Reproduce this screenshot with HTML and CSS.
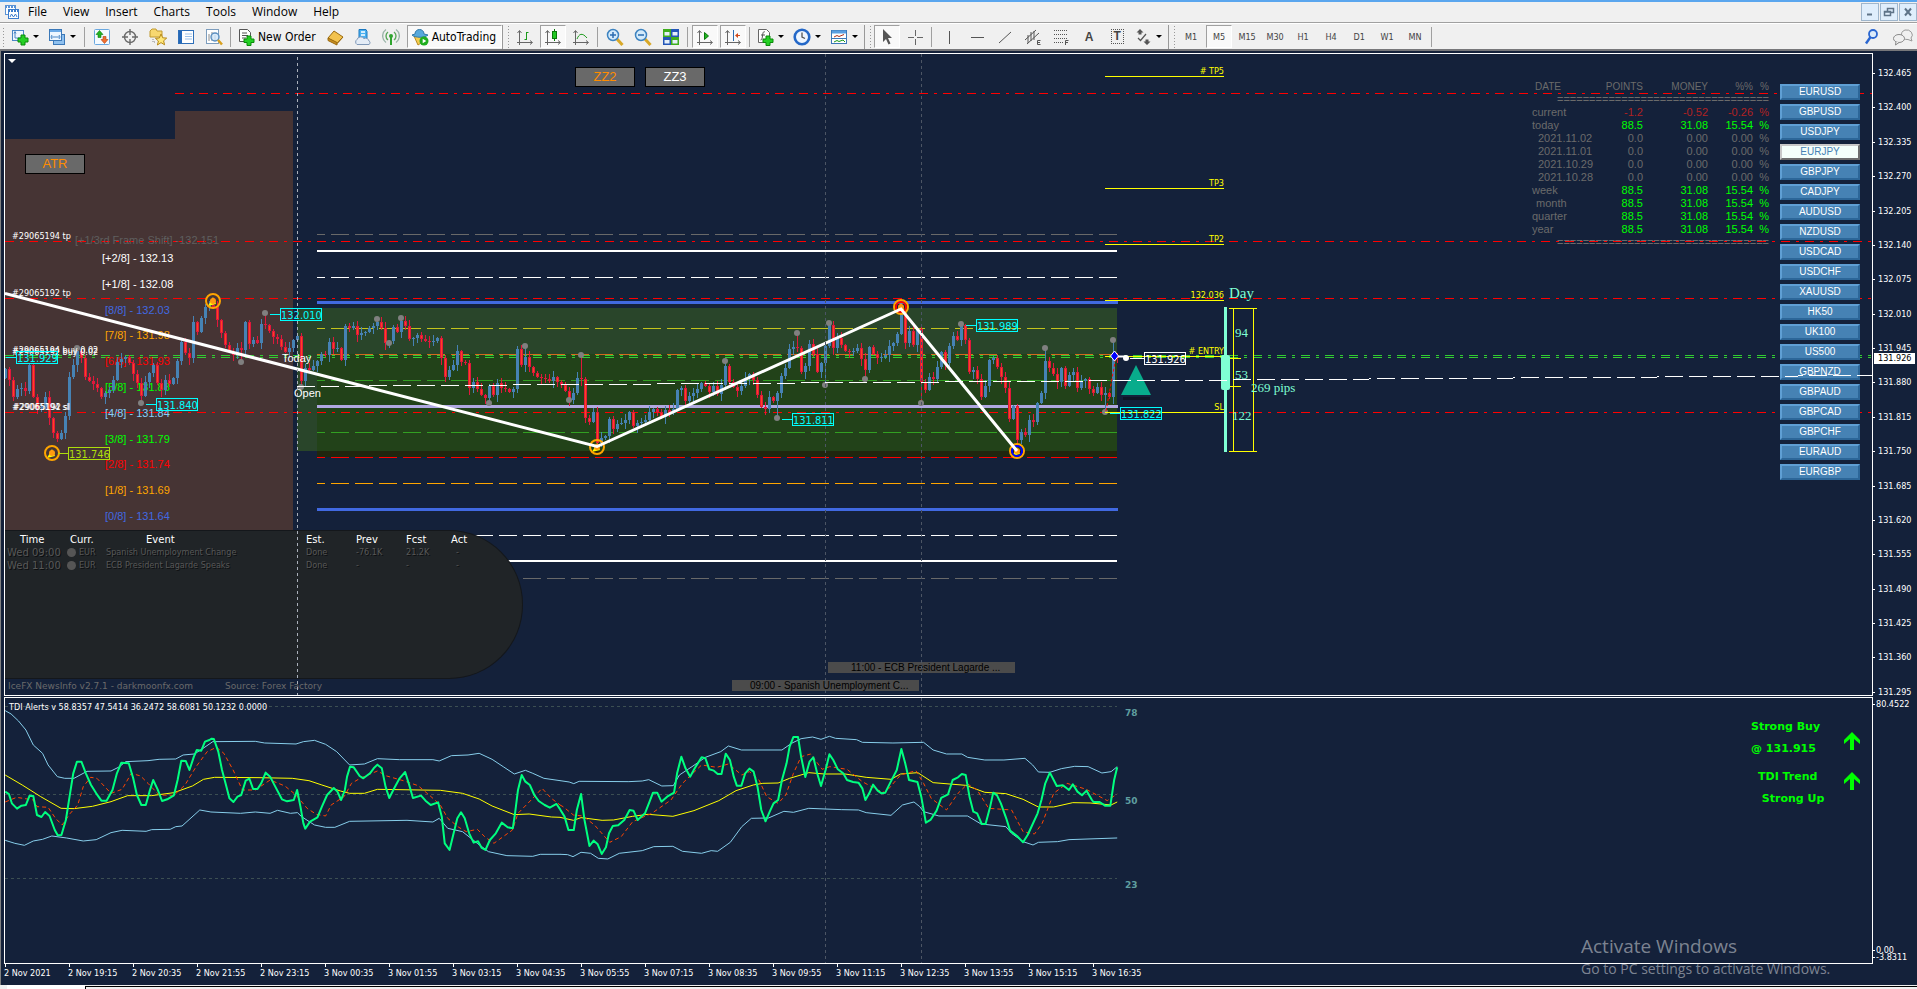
FILE: index.html
```html
<!DOCTYPE html>
<html lang="en">
<head>
  <meta charset="UTF-8" />
  <meta name="viewport" content="width=device-width, initial-scale=1.0"/>
  <title>EURJPY,M5</title>
  <link rel="stylesheet" href="styles.css">
</head>
<body>
  <div class="terminal">
    <header class="menubar">
      <svg class="app-icon" width="16" height="16" viewBox="0 0 16 16"><rect x="1.500" y="1.500" width="10" height="9" fill="#fff" stroke="#5b93d6"/><path d="M1 3h11" stroke="#5b93d6" stroke-width="2" stroke-dasharray="2 1"/><rect x="4.500" y="5.500" width="10" height="9" fill="#fff" stroke="#3c7ccc"/><path d="M4 7h11" stroke="#3c7ccc" stroke-width="2" stroke-dasharray="2 1"/><path d="M6 13l1.500-3 2 3 2-3 1.500 3" fill="none" stroke="#3c7ccc"/></svg>
      <nav class="menu">
        <a href="#">File</a>
        <a href="#">View</a>
        <a href="#">Insert</a>
        <a href="#">Charts</a>
        <a href="#">Tools</a>
        <a href="#">Window</a>
        <a href="#">Help</a>
      </nav>
      <div class="window-buttons">
        <button aria-label="Minimize"><svg width="12" height="12" viewBox="0 0 12 12"><path d="M3 8.500h5" stroke="#5f7488" stroke-width="2"/></svg></button>
        <button aria-label="Restore"><svg width="12" height="12" viewBox="0 0 12 12"><path d="M4.500 5V2.500h6v4H8M4.500 2.500h6M1.500 5.500h6v4h-6zM1.500 6h6" fill="none" stroke="#5f7488" stroke-width="1.500"/></svg></button>
        <button aria-label="Close"><svg width="12" height="12" viewBox="0 0 12 12"><path d="M3 2.500l6 7M9 2.500l-6 7" stroke="#5f7488" stroke-width="2"/></svg></button>
      </div>
    </header>

    <div class="toolbar">
      <span class="grip"></span>
      <button class="tool drop" aria-label="New chart"><svg width="18" height="18" viewBox="0 0 18 18"><rect x="1.500" y="2.500" width="11" height="10" fill="#eef6ff" stroke="#4a86c5"/><path d="M4 4v6h7M3 5.500l1-2 1 2" fill="none" stroke="#4a86c5"/><path d="M10 7h4v3h3v4h-3v3h-4v-3H7v-4h3z" fill="#25d025" stroke="#0a8a0a"/></svg></button>
      <button class="tool drop" aria-label="Profiles"><svg width="18" height="18" viewBox="0 0 18 18"><rect x="5.500" y="6.500" width="11" height="10" fill="#8fc0ee" stroke="#3b78b8"/><rect x="1.500" y="1.500" width="12" height="11" fill="#eef6ff" stroke="#3b78b8"/><path d="M2 3h11" stroke="#6aa8e6" stroke-width="2"/><path d="M4 9h7M4 7l-1 2 1 2M11 7l1 2-1 2" fill="none" stroke="#4a86c5"/></svg></button>
      <span class="sep"></span>
      <button class="tool" aria-label="Market Watch"><svg width="18" height="18" viewBox="0 0 18 18"><rect x="1.500" y="1.500" width="15" height="15" rx="1" fill="#f4faff" stroke="#6aa8e0"/><path d="M6.500 2.500L10 6.500H8v3H5v-3H3z" fill="#22b422" stroke="#0d7a0d" stroke-width=".6"/><path d="M11.500 15.500L8 11.500h2v-3h3v3h2z" fill="#f07030" stroke="#b04010" stroke-width=".6"/></svg></button>
      <button class="tool" aria-label="Data Window"><svg width="18" height="18" viewBox="0 0 18 18"><circle cx="9" cy="9" r="5.500" fill="none" stroke="#6a6a6a" stroke-width="1.400"/><path d="M9 1v6M9 11v6M1 9h6M11 9h6" stroke="#6a6a6a" stroke-width="1.400"/></svg></button>
      <button class="tool" aria-label="Navigator"><svg width="18" height="18" viewBox="0 0 18 18"><path d="M1 3l2-2h4l1 2h5v6H1z" fill="#f8d870" stroke="#c09a30"/><path d="M4 11v3h3" fill="none" stroke="#888" stroke-dasharray="1 1"/><path d="M12 6l1.700 3.800 4 .3-3.100 2.700 1 4-3.600-2.200L8.400 17l1-4-3-2.700 4-.3z" fill="#ffe87a" stroke="#b88a18"/></svg></button>
      <button class="tool" aria-label="Terminal"><svg width="18" height="18" viewBox="0 0 18 18"><rect x="1.500" y="2.500" width="15" height="13" fill="#fff" stroke="#2f6fb8"/><rect x="2" y="3" width="3" height="12" fill="#2468b8"/><path d="M8 6h7M8 8.500h7M8 11h7" stroke="#9fc3ea"/></svg></button>
      <button class="tool" aria-label="Strategy Tester"><svg width="18" height="18" viewBox="0 0 18 18"><rect x="1.500" y="1.500" width="12" height="14" fill="#fff" stroke="#7d9dbd"/><path d="M4 13V6M7 13V4M10 13V7" stroke="#8a8a8a"/><circle cx="10" cy="9" r="4" fill="#cfe6fa" fill-opacity=".8" stroke="#5b8fc0" stroke-width="1.400"/><path d="M13 12l4 4.500" stroke="#d8a020" stroke-width="2.500"/></svg></button>
      <span class="sep"></span>
      <button class="tool text new-order"><svg width="18" height="18" viewBox="0 0 18 18"><path d="M2.500 1.500h8l3 3v9h-11z" fill="#fff" stroke="#555"/><path d="M5 5h5M5 7.500h6M5 10h4" stroke="#555"/><path d="M10 8h4v3h3v3.500h-3v3h-4v-3H7V11h3z" fill="#25d025" stroke="#0a8a0a"/></svg>New Order</button>
      <button class="tool" aria-label="MetaEditor"><svg width="18" height="18" viewBox="0 0 18 18"><path d="M2 10L8 3l9 6-6 6.500z" fill="#f2c24e" stroke="#9a6a10"/><path d="M2 10v2.500l9 4.500v-2.500zM11 15.500l6-6.500" fill="#c98f20" stroke="#9a6a10"/></svg></button>
      <button class="tool" aria-label="Virtual hosting"><svg width="18" height="18" viewBox="0 0 18 18"><path d="M5 1.500h7l1 2v7H5z" fill="#49b0f0" stroke="#1b78c0"/><path d="M7 4h4M7 7h4" stroke="#fff" stroke-width="1.500"/><path d="M3 16.500a3 3 0 010-5 4 4 0 017-1 3.500 3.500 0 015 2.500 2 2 0 010 3.500z" fill="#e4ecf6" stroke="#7f98b8"/></svg></button>
      <button class="tool" aria-label="Signals"><svg width="18" height="18" viewBox="0 0 18 18"><path d="M9 9v8" stroke="#2fa52f" stroke-width="2"/><circle cx="9" cy="8" r="2" fill="#2fa52f"/><path d="M6 12a5 5 0 010-8M12 4a5 5 0 010 8" fill="none" stroke="#5aa85a" stroke-width="1.400"/><path d="M4 14.500a8 8 0 010-13M14 1.500a8 8 0 010 13" fill="none" stroke="#9ab4a8" stroke-width="1.400"/></svg></button>
      <button class="tool text auto pressed"><svg width="18" height="18" viewBox="0 0 18 18"><path d="M3 8h11l-4 7-3 2z" fill="#f6cc50" stroke="#b88a20"/><path d="M4 6c0-6 9-6 9 0l4 1c-3 3-13 3-16 0z" fill="#57a9dc" stroke="#2f78a8"/><circle cx="13" cy="13" r="4.500" fill="#1fae1f"/><path d="M11.700 10.700v4.600l3.600-2.300z" fill="#fff"/></svg>AutoTrading</button>
      <span class="grip edge"></span>
      <button class="tool" aria-label="Bar chart"><svg width="18" height="18" viewBox="0 0 18 18"><path d="M3.500 17V3M1.500 5l2-2.500 2 2.500M1 14.500h15M14 12.500l2.500 2-2.500 2" fill="none" stroke="#666"/><path d="M8.500 11.500h2V4.500h2M10.500 4v8" fill="none" stroke="#1a9a1a"/></svg></button>
      <button class="tool pressed" aria-label="Candlesticks"><svg width="18" height="18" viewBox="0 0 18 18"><path d="M3.500 17V3M1.500 5l2-2.500 2 2.500M1 14.500h15M14 12.500l2.500 2-2.500 2" fill="none" stroke="#666"/><path d="M10.500 1v12" stroke="#0a7a0a"/><rect x="8.500" y="3.500" width="4" height="7" fill="#22c822" stroke="#0a7a0a"/></svg></button>
      <button class="tool" aria-label="Line chart"><svg width="18" height="18" viewBox="0 0 18 18"><path d="M3.500 17V3M1.500 5l2-2.500 2 2.500M1 14.500h15M14 12.500l2.500 2-2.500 2" fill="none" stroke="#666"/><path d="M5 11c2-5 5-7 10-1" fill="none" stroke="#1a9a1a"/></svg></button>
      <span class="sep"></span>
      <button class="tool" aria-label="Zoom in"><svg width="18" height="18" viewBox="0 0 18 18"><path d="M11 11l5.500 6" stroke="#d8a828" stroke-width="3"/><circle cx="7" cy="7" r="5.500" fill="#d4ebfb" stroke="#3d83c0" stroke-width="1.500"/><path d="M7 4v6M4 7h6" stroke="#2a6cb0" stroke-width="1.500"/></svg></button>
      <button class="tool" aria-label="Zoom out"><svg width="18" height="18" viewBox="0 0 18 18"><path d="M11 11l5.500 6" stroke="#d8a828" stroke-width="3"/><circle cx="7" cy="7" r="5.500" fill="#d4ebfb" stroke="#3d83c0" stroke-width="1.500"/><path d="M4 7h6" stroke="#2a6cb0" stroke-width="1.500"/></svg></button>
      <button class="tool" aria-label="Tile windows"><svg width="18" height="18" viewBox="0 0 18 18"><path d="M1 1h8v8H1zM9 9h8v8H9z" fill="#3fae1e"/><path d="M9 1h8v8H9zM1 9h8v8H1z" fill="#2456b8"/><path d="M2.500 4h5v3.500h-5zM10.500 4h5v3.500h-5zM2.500 12h5v3.500h-5zM10.500 12h5v3.500h-5z" fill="#e6f0fa"/></svg></button>
      <span class="sep"></span>
      <button class="tool pressed" aria-label="Auto scroll"><svg width="18" height="18" viewBox="0 0 18 18"><path d="M3.500 17V3M1.500 5l2-2.500 2 2.500M1 14.500h15M14 12.500l2.500 2-2.500 2" fill="none" stroke="#666"/><path d="M8.500 4.500v7l4-3.500z" fill="#22b422" stroke="#0a7a0a"/></svg></button>
      <button class="tool pressed" aria-label="Chart shift"><svg width="18" height="18" viewBox="0 0 18 18"><path d="M3.500 17V3M1.500 5l2-2.500 2 2.500M1 14.500h15M14 12.500l2.500 2-2.500 2" fill="none" stroke="#666"/><path d="M9.500 2v11" stroke="#2a6cb0"/><path d="M16 7.500h-4" stroke="#d04818"/><path d="M14 5l-3 2.500 3 2.500z" fill="#d04818"/></svg></button>
      <span class="sep"></span>
      <button class="tool drop" aria-label="Indicators"><svg width="18" height="18" viewBox="0 0 18 18"><path d="M2.500 1.500h8l3 3v10h-11z" fill="#fff" stroke="#666"/><path d="M9 4c-2-1-2 1-2.500 4S6 12 4.500 12M5 7h4" fill="none" stroke="#555"/><path d="M10 8h4v3h3v3.500h-3v3h-4v-3H7V11h3z" fill="#25d025" stroke="#0a8a0a"/></svg></button>
      <button class="tool drop" aria-label="Periods"><svg width="18" height="18" viewBox="0 0 18 18"><circle cx="9" cy="9" r="7.300" fill="#eef6ff" stroke="#2468c8" stroke-width="2.600"/><path d="M9 4.500V9l3 1.500" fill="none" stroke="#555" stroke-width="1.300"/></svg></button>
      <button class="tool drop" aria-label="Templates"><svg width="18" height="18" viewBox="0 0 18 18"><rect x="1.500" y="2.500" width="15" height="13" fill="#fff" stroke="#3b78b8"/><path d="M2 4h14" stroke="#5a9fe0" stroke-width="3"/><path d="M4 9l3-1.500 2 1 5-2" fill="none" stroke="#b03018"/><path d="M2 10.500h14" stroke="#3b78b8"/><path d="M4 14l3-1.500 2 1 4-1.500 2 2" fill="none" stroke="#1a9a1a"/></svg></button>
      <span class="grip edge"></span>
      <button class="tool pressed" aria-label="Cursor"><svg width="18" height="18" viewBox="0 0 18 18"><path d="M5 1v13l3-3 2.500 5.500 2-1L10 10h4z" fill="#555"/></svg></button>
      <button class="tool" aria-label="Crosshair"><svg width="18" height="18" viewBox="0 0 18 18"><path d="M9.500 2v6M9.500 11v6M2 9.500h6M11 9.500h6" stroke="#666"/></svg></button>
      <span class="sep"></span>
      <button class="tool" aria-label="Vertical line"><svg width="18" height="18" viewBox="0 0 18 18"><path d="M9.500 3v13" stroke="#555"/></svg></button>
      <button class="tool" aria-label="Horizontal line"><svg width="18" height="18" viewBox="0 0 18 18"><path d="M3 9.500h13" stroke="#555"/></svg></button>
      <button class="tool" aria-label="Trendline"><svg width="18" height="18" viewBox="0 0 18 18"><path d="M3 15L15 4" stroke="#555"/></svg></button>
      <button class="tool" aria-label="Equidistant channel"><svg width="18" height="18" viewBox="0 0 18 18"><path d="M1 12L12 2M3 16L15 5M4 7v8M7 4v9M10 3v9" stroke="#555"/><path d="M16.500 12.500h-3v4h3M13.500 14.500h2.500" fill="none" stroke="#555"/></svg></button>
      <button class="tool" aria-label="Fibonacci retracement"><svg width="18" height="18" viewBox="0 0 18 18"><path d="M2 2.500h14M2 6.500h14M2 10.500h14M2 14.500h10" stroke="#555" stroke-dasharray="1 1"/><path d="M13.500 17v-4.500h3M13.500 14.500h2.500" fill="none" stroke="#555"/></svg></button>
      <button class="tool letter">A</button>
      <button class="tool letter boxed" aria-label="Text label"><span>T</span></button>
      <button class="tool drop" aria-label="Arrows"><svg width="18" height="18" viewBox="0 0 18 18"><path d="M6 1l3.500 3.500H7.500v2h-3v-2h-2zM13 17l-3.500-3.500h2v-2h3v2h2z" fill="#555"/><path d="M4 10l2.500 2.500L12 6" fill="none" stroke="#555" stroke-width="1.200"/></svg></button>
      <span class="grip edge"></span>
      <button class="tool tf">M1</button>
      <button class="tool tf pressed">M5</button>
      <button class="tool tf">M15</button>
      <button class="tool tf">M30</button>
      <button class="tool tf">H1</button>
      <button class="tool tf">H4</button>
      <button class="tool tf">D1</button>
      <button class="tool tf">W1</button>
      <button class="tool tf">MN</button>
      <span class="sep"></span>
      <div class="toolbar-right">
        <button class="tool" aria-label="Search"><svg width="18" height="18" viewBox="0 0 18 18"><circle cx="11" cy="6" r="4" fill="#dcebfa" stroke="#2a66d0" stroke-width="1.800"/><path d="M8.500 9L4 15.500" stroke="#2a66d0" stroke-width="2.400"/></svg></button>
        <button class="tool" aria-label="Messages"><svg width="22" height="18" viewBox="0 0 22 18"><path d="M13 2a6 5 0 016 8l1 3-4-1.500A6 5 0 0113 2z" fill="#f0f0f0" stroke="#999"/><ellipse cx="7" cy="10.500" rx="5.500" ry="4" fill="#f0f0f0" stroke="#8a8a8a"/><path d="M4 13.500l-.5 3.500 3.500-2.500" fill="#f0f0f0" stroke="#8a8a8a"/></svg></button>
      </div>
    </div>

    <main class="chart">
      <section class="pane price-pane">
        <svg class="canvas">
          <g transform="translate(-5 -54)">
            <!-- session boxes -->
            <path class="asia" d="M5 139h170V111h118v420H5z"/>
            <path d="M297 308h820v143H297z" fill="#29452a"/>
            <path d="M317 354h800v97H317z" fill="#224219"/>
            <path d="M317 451h800v6H317z" fill="#20260f"/>

            <!-- order lines -->
            <g class="order red">
              <path d="M175 93.500H4000"/>
              <path d="M5 241.500H4000"/>
              <path d="M5 298.500H4000"/>
              <path d="M5 412.500H4000"/>
            </g>
            <g class="order green">
              <path d="M5 355.500H4000"/>
              <path d="M5 357.500H4000"/>
            </g>

            <!-- murrey levels -->
            <g class="level">
              <path d="M317 234.500h800" stroke="#696969"/>
              <path d="M317 277.500h800" stroke="#fff"/>
              <path d="M317 328.500h800" stroke="#c4c41c"/>
              <path d="M317 354.500h800" stroke="#d2691e"/>
              <path d="M317 380.500h800" stroke="#32a022"/>
              <path d="M317 432.500h800" stroke="#32a022"/>
              <path d="M317 457.500h800" stroke="#f00"/>
              <path d="M317 483.500h800" stroke="#ffa500"/>
              <path d="M317 535.500h800" stroke="#fff"/>
              <path d="M317 578.500h800" stroke="#696969"/>
            </g>
            <g fill="none">
              <path d="M317 251h800M317 561h800" stroke="#fff" stroke-width="2"/>
              <path d="M317 302.500h801M317 509.500h801" stroke="#4169e1" stroke-width="3"/>
              <path d="M317 406.500h801" stroke="#b0a8e0" stroke-width="3"/>
            </g>

            <g id="levels" class="arial"></g>
            <text class="arial" x="75" y="244" fill="#5f5f5f">[+1/3rd Frame Shift] -132.151</text>

            <g id="candles" shape-rendering="crispEdges"></g>
            <g id="fractals" fill="#808080"></g>

            <g class="small" fill="#fff">
              <text x="12" y="239">#29065194 tp</text>
              <text x="12" y="296">#29065192 tp</text>
              <text x="12" y="353">#29065194 buy 0.02</text>
              <text x="12" y="355">#29065192 buy 0.02</text>
              <text x="12" y="410">#29065194 sl</text>
              <text x="13" y="410">#29065192 sl</text>
            </g>
            <g class="arial" fill="#fff">
              <text x="282" y="362">Today</text>
              <text x="294" y="397">Open</text>
            </g>

            <!-- zigzag -->
            <g id="swings"></g>
            <path d="M5 293.500L597 446.500 901 309 1017 451" fill="none" stroke="#fff" stroke-width="3"/>

            <!-- targets -->
            <path d="M1105 76.500h119M1105 188.500h119M1105 244.500h119M1105 300.500h119M1105 356.500h119M1105 412.500h119" stroke="#ff0"/>
            <g class="small" fill="#ff0" text-anchor="end">
              <text x="1224" y="74"># TP5</text>
              <text x="1224" y="186">TP3</text>
              <text x="1224" y="242">TP2</text>
              <text x="1224" y="298">132.036</text>
              <text x="1224" y="354"># ENTRY</text>
              <text x="1224" y="410">SL</text>
            </g>
            <path d="M1106 411l10-54" stroke="#f00" stroke-dasharray="3 2"/>
            <path d="M1130 358.500h14" stroke="#fff"/>
            <path d="M1118 356.500h8" stroke="#fff" stroke-width="2"/>
            <circle cx="1126" cy="358" r="3" fill="#fff"/>
            <path d="M1114.500 351l4 5-4 5-4-5z" fill="#00f" stroke="#fff"/>
            <g id="tags"></g>
            <path d="M1123 397h27v3h-27z" fill="#0e1626"/>
            <path d="M1136 365l15 30h-30z" fill="#08ac8c"/>

            <!-- daily range -->
            <path d="M1225.500 307v145" stroke="#7fffd4" stroke-width="3"/>
            <rect x="1221" y="355" width="9" height="35" rx="2" fill="#7fffd4"/>
            <path d="M1229 308.500h28M1229 451.500h28M1233.500 308v143M1253.500 308v143M1230 358.500h11M1230 386.500h11" stroke="#ff0" fill="none"/>
            <g class="range" fill="#7fffd4">
              <text class="day" x="1229" y="298">Day</text>
              <text x="1235" y="337">94</text>
              <text x="1235" y="379">53</text>
              <text x="1232" y="420">122</text>
              <text x="1251" y="392">269 pips</text>
            </g>
            <path d="M8 59h8l-4 4z" fill="#fff"/>

            <!-- news footer and bars -->
            <g class="footer-text">
              <text x="8" y="689">IceFX NewsInfo v2.7.1 - darkmoonfx.com</text>
              <text x="225" y="689">Source: Forex Factory</text>
            </g>
            <path d="M828 662h187v11H828zM732 680h187v11H732z" fill="#4b4b4b"/>
            <g class="bar-label">
              <text x="851" y="671">11:00 - ECB President Lagarde ...</text>
              <text x="750" y="689">09:00 - Spanish Unemployment C...</text>
            </g>
          </g>
        </svg>

        <button class="flat atr">ATR</button>
        <div class="zz">
          <button class="flat">ZZ2</button>
          <button class="flat off">ZZ3</button>
        </div>

        <div class="news">
          <table>
            <colgroup><col class="c-time"><col class="c-curr"><col class="c-event"><col class="c-est"><col class="c-prev"><col class="c-fcst"><col></colgroup>
            <thead>
              <tr><th class="h-time">Time</th><th class="h-curr">Curr.</th><th class="h-event">Event</th><th>Est.</th><th>Prev</th><th>Fcst</th><th>Act</th></tr>
            </thead>
            <tbody>
              <tr><td class="time">Wed 09:00</td><td><i class="impact"></i>EUR</td><td>Spanish Unemployment Change</td><td>Done</td><td>-76.1K</td><td>21.2K</td><td class="act">-</td></tr>
              <tr><td class="time">Wed 11:00</td><td><i class="impact"></i>EUR</td><td>ECB President Lagarde Speaks</td><td>Done</td><td>-</td><td>-</td><td class="act">-</td></tr>
            </tbody>
          </table>
        </div>

        <table class="profit">
          <colgroup><col class="p-date"><col class="p-points"><col class="p-money"><col class="p-pct"><col class="p-sign"></colgroup>
          <thead>
            <tr><th>DATE</th><th>POINTS</th><th>MONEY</th><th>%%</th><th>%</th></tr>
            <tr><td class="rule" colspan="5">=================================</td></tr>
          </thead>
          <tbody>
            <tr class="loss"><th>current</th><td>-1.2</td><td>-0.52</td><td>-0.26</td><td>%</td></tr>
            <tr class="gain"><th>today</th><td>88.5</td><td>31.08</td><td>15.54</td><td>%</td></tr>
            <tr><th class="past">2021.11.02</th><td>0.0</td><td>0.00</td><td>0.00</td><td>%</td></tr>
            <tr><th class="past">2021.11.01</th><td>0.0</td><td>0.00</td><td>0.00</td><td>%</td></tr>
            <tr><th class="past">2021.10.29</th><td>0.0</td><td>0.00</td><td>0.00</td><td>%</td></tr>
            <tr><th class="past">2021.10.28</th><td>0.0</td><td>0.00</td><td>0.00</td><td>%</td></tr>
            <tr class="gain"><th>week</th><td>88.5</td><td>31.08</td><td>15.54</td><td>%</td></tr>
            <tr class="gain"><th class="month">month</th><td>88.5</td><td>31.08</td><td>15.54</td><td>%</td></tr>
            <tr class="gain"><th>quarter</th><td>88.5</td><td>31.08</td><td>15.54</td><td>%</td></tr>
            <tr class="gain"><th>year</th><td>88.5</td><td>31.08</td><td>15.54</td><td>%</td></tr>
            <tr><td class="rule" colspan="5">=================================</td></tr>
          </tbody>
        </table>

        <div class="symbols">
          <button>EURUSD</button>
          <button>GBPUSD</button>
          <button>USDJPY</button>
          <button class="active">EURJPY</button>
          <button>GBPJPY</button>
          <button>CADJPY</button>
          <button>AUDUSD</button>
          <button>NZDUSD</button>
          <button>USDCAD</button>
          <button>USDCHF</button>
          <button>XAUUSD</button>
          <button>HK50</button>
          <button>UK100</button>
          <button>US500</button>
          <button>GBPNZD</button>
          <button>GBPAUD</button>
          <button>GBPCAD</button>
          <button>GBPCHF</button>
          <button>EURAUD</button>
          <button>EURGBP</button>
        </div>

        <svg class="canvas overlay">
          <g transform="translate(-5 -54)" fill="none" shape-rendering="crispEdges">
            <path d="M297.500 57v2000" stroke="#aab0ba" stroke-dasharray="3 3"/>
            <path d="M825.500 54v2000M921.500 54v2000" stroke="#4c5564" stroke-dasharray="3 3"/>
            <path d="M297 386.500L1872 375.500" stroke="#fff" stroke-dasharray="18 6"/>
          </g>
        </svg>
      </section>

      <div class="axis price-axis">
        <span>132.465</span><span>132.400</span><span>132.335</span><span>132.270</span><span>132.205</span><span>132.140</span><span>132.075</span><span>132.010</span><span>131.945</span><span>131.880</span><span>131.815</span><span>131.750</span><span>131.685</span><span>131.620</span><span>131.555</span><span>131.490</span><span>131.425</span><span>131.360</span><span>131.295</span>
        <b class="bid">131.926</b>
      </div>

      <section class="pane tdi-pane">
        <svg class="canvas">
          <g transform="translate(-5 -698)">
            <path d="M5 706.500h1112M5 794.500h1112M5 878.500h1112" stroke="#3c4f52" stroke-dasharray="3 3"/>
            <path d="M825.500 698v1000M921.500 698v1000" stroke="#4c5564" stroke-dasharray="3 3"/>
            <!-- first half of the session -->
            <g class="tdi" transform="translate(0 690) scale(.37 .3333)">
              <polyline class="band" points="14,62 30,72 50,93 70,120 90,165 115,190 130,225 155,260 175,265 200,265 235,244 300,243 320,232 340,215 400,212 430,208 475,207 495,195 525,192 545,178 575,155 690,154 715,159 800,162 820,155 850,151 880,163 910,185 945,225 985,222 1020,206 1080,209 1170,209 1187,213 1220,197 1265,195 1295,190 1330,208 1360,230 1390,252 1420,241 1440,250 1470,265 1514,272"/>
              <polyline class="band" points="14,451 40,460 66,466 90,453 115,448 140,438 180,444 225,453 260,449 300,428 330,421 395,424 410,419 460,418 475,410 492,408 540,360 570,366 650,370 690,366 730,370 750,361 785,370 804,368 815,380 850,405 880,412 905,412 945,394 1100,391 1170,396 1187,385 1210,415 1250,425 1290,460 1320,485 1370,497 1440,499 1460,493 1514,493"/>
              <polyline class="base" points="14,255 60,285 110,320 165,355 200,356 250,349 300,335 345,317 410,317 470,308 520,288 550,268 580,262 700,263 790,265 835,272 870,285 920,303 945,310 985,310 1020,298 1190,301 1250,310 1295,327 1330,348 1390,374 1430,372 1490,381 1514,382"/>
              <polyline class="signal" points="14,336 45,322 90,330 100,350 130,352 150,385 168,405 190,370 210,345 225,290 245,262 262,265 300,310 330,298 355,250 380,258 400,280 430,315 470,316 500,285 530,230 560,185 585,172 605,190 630,240 655,300 690,300 730,270 770,288 800,315 830,355 855,373 880,378 895,345 930,320 950,280 975,264 1020,243 1045,258 1090,272 1130,287 1160,315 1190,345 1210,385 1240,412 1260,425 1290,418 1310,440 1335,460 1360,440 1385,420 1400,370 1440,325 1465,295 1490,325 1514,345"/>
              <polyline class="rsi" points="14,305 24,312 32,340 46,356 58,347 70,345 80,317 90,318 100,375 112,381 122,366 134,378 148,420 156,436 166,435 178,390 188,320 198,250 208,215 220,215 232,250 246,285 260,310 274,332 288,332 304,300 316,250 328,218 348,220 360,265 370,315 382,345 394,345 404,305 414,270 426,298 438,333 452,328 470,316 480,270 490,212 502,213 512,240 524,200 532,180 544,182 554,155 566,150 572,146 578,147 590,185 600,240 612,290 620,325 631,336 642,320 652,315 664,272 674,266 684,297 696,297 706,280 718,248 730,260 744,290 762,328 776,334 794,330 803,300 812,350 820,400 825,416 838,395 858,382 870,350 884,315 902,294 912,305 922,330 932,300 938,260 946,230 956,232 972,258 982,265 1000,250 1010,235 1020,224 1032,235 1042,290 1052,324 1064,298 1080,265 1095,246 1106,285 1116,324 1138,317 1150,332 1164,345 1184,337 1194,380 1202,460 1215,480 1226,430 1236,385 1246,367 1256,385 1268,430 1280,458 1292,454 1302,474 1312,480 1324,450 1340,430 1356,398 1372,412 1386,415 1392,370 1400,300 1410,255 1420,275 1432,285 1444,315 1456,333 1472,345 1486,353 1504,342 1514,358"/>
            </g>
            <!-- second half -->
            <g class="tdi" transform="translate(560 640) scale(.3827 .3333)">
              <polyline class="band" points="0,422 24,426 36,431 50,424 180,425 215,423 232,419 266,438 296,437 312,405 345,380 380,352 420,335 440,318 474,330 580,330 605,310 630,296 660,291 682,298 704,289 720,295 775,299 790,307 870,309 950,307 975,330 1010,342 1050,342 1065,352 1110,360 1160,360 1215,355 1235,375 1250,396 1280,397 1310,386 1345,379 1380,380 1416,399 1440,395 1456,380"/>
              <polyline class="band" points="0,643 20,644 34,650 55,637 80,640 100,655 125,657 155,640 215,632 245,620 295,619 320,634 370,640 395,632 412,634 445,607 475,560 500,535 545,534 585,514 610,517 650,505 735,509 780,510 800,518 865,526 895,495 925,486 940,500 950,515 990,528 1065,528 1100,552 1165,560 1180,580 1210,605 1236,615 1250,607 1300,605 1330,599 1456,594"/>
              <polyline class="base" points="0,532 35,541 55,533 110,541 140,540 190,529 230,523 295,529 350,512 415,482 460,452 505,435 530,430 570,429 600,415 650,398 690,402 745,402 800,412 865,418 890,402 935,398 975,428 1060,436 1110,457 1165,461 1210,478 1250,501 1290,501 1340,488 1385,489 1440,495 1456,486"/>
              <polyline class="signal" points="0,495 8,500 35,525 60,528 90,555 130,607 160,590 190,545 240,520 290,480 320,430 370,375 410,382 440,372 475,405 495,395 520,420 540,470 570,490 590,465 610,400 630,350 655,342 685,388 705,380 750,388 790,425 830,450 850,458 890,405 930,392 950,430 970,475 1010,510 1040,460 1065,432 1090,450 1120,505 1180,510 1210,575 1240,582 1260,550 1290,460 1325,430 1375,448 1430,482 1456,462"/>
              <polyline class="rsi" points="0,508 12,530 22,570 36,570 44,510 55,462 64,540 77,618 88,602 98,612 109,642 120,622 128,580 138,558 152,556 168,540 182,510 192,512 203,540 222,520 234,485 243,458 254,458 265,485 280,470 298,458 306,400 317,350 328,385 340,410 352,385 370,352 380,355 390,388 402,392 412,402 422,402 433,341 444,360 454,410 462,437 474,437 484,400 495,386 506,395 516,440 526,510 537,544 548,515 558,490 570,480 580,420 592,370 600,320 610,291 622,291 630,350 641,411 652,365 662,352 672,400 682,438 694,390 704,343 714,360 726,388 740,400 750,420 766,426 780,428 790,445 798,480 808,460 818,434 830,452 840,460 850,458 862,430 880,390 892,327 902,370 912,420 934,426 944,470 956,548 968,540 984,512 996,474 1014,463 1026,420 1040,412 1050,402 1060,405 1070,470 1080,515 1090,520 1102,552 1112,552 1124,500 1132,458 1142,466 1152,490 1166,535 1176,572 1196,590 1210,607 1222,585 1234,555 1248,520 1258,480 1268,430 1280,398 1290,420 1298,438 1314,436 1330,450 1340,433 1352,455 1364,466 1376,452 1390,480 1394,486 1410,486 1424,497 1438,497 1448,420 1456,382"/>
            </g>
            <text class="small" x="9" y="710" fill="#fff">TDI Alerts v 58.8357 47.5414 36.2472 58.6081 50.1232 0.0000</text>
            <g class="small bold" fill="#5f9ea0">
              <text x="1125" y="716">78</text>
              <text x="1125" y="804">50</text>
              <text x="1125" y="888">23</text>
            </g>
          </g>
        </svg>
        <div class="trend">
          <div class="trend-text">
            <p>Strong Buy<br>@ 131.915</p>
            <p class="lower">TDI Trend<br>&#160;Strong Up</p>
          </div>
          <div class="trend-arrows">
            <svg width="16" height="18" viewBox="0 0 16 18"><path d="M8 0l8 8v4l-6-5v11H6V7l-6 5V8z" fill="#0f0"/></svg>
            <svg width="16" height="18" viewBox="0 0 16 18"><path d="M8 0l8 8v4l-6-5v11H6V7l-6 5V8z" fill="#0f0"/></svg>
          </div>
        </div>
      </section>

      <div class="axis tdi-axis">
        <span>80.4522</span>
        <div class="low"><span>0.00</span><span>-3.8311</span></div>
      </div>

      <div class="time-axis">
        <span>2 Nov 2021</span><span>2 Nov 19:15</span><span>2 Nov 20:35</span><span>2 Nov 21:55</span><span>2 Nov 23:15</span><span>3 Nov 00:35</span><span>3 Nov 01:55</span><span>3 Nov 03:15</span><span>3 Nov 04:35</span><span>3 Nov 05:55</span><span>3 Nov 07:15</span><span>3 Nov 08:35</span><span>3 Nov 09:55</span><span>3 Nov 11:15</span><span>3 Nov 12:35</span><span>3 Nov 13:55</span><span>3 Nov 15:15</span><span>3 Nov 16:35</span>
      </div>
    </main>

    <footer class="tabs"><span class="tab"></span><span class="tab-line"></span></footer>

    <div class="activate">
      <p class="activate-title">Activate Windows</p>
      <p>Go to PC settings to activate Windows.</p>
    </div>
  </div>

  <script src="script.js"></script>
</body>
</html>
```
FILE: styles.css
```css
* {
  box-sizing: border-box;
}

body {
  margin: 0;
  background: #f0f0f0;
  font-family: 'DejaVu Sans Condensed', 'DejaVu Sans', sans-serif;
  font-size: 9px;
  color: #fff;
}

button {
  font-family: inherit;
  padding: 0;
  margin: 0;
  border: none;
  background: none;
}

p {
  margin: 0;
}

table {
  border-collapse: collapse;
  table-layout: fixed;
}

th, td {
  padding: 0;
  font-weight: normal;
  text-align: left;
  white-space: nowrap;
}

.terminal {
  position: relative;
  display: flex;
  flex-direction: column;
  height: 100vh;
  overflow: hidden;
  border-top: 2px solid #5aa6ee;
}

/* menu */
.menubar {
  display: flex;
  align-items: center;
  height: 21px;
  padding-left: 4px;
  background: #f0f0f0;
  border-bottom: 1px solid #a0a0a0;
}

.menu {
  display: flex;
  gap: 16px;
  margin-left: 8px;
}

.menu a {
  color: #000;
  text-decoration: none;
  font-family: 'Open Sans', sans-serif;
  font-size: 12px;
  line-height: 18px;
}

.window-buttons {
  display: flex;
  gap: 1px;
  margin-left: auto;
}

.window-buttons button {
  display: flex;
  align-items: center;
  justify-content: center;
  width: 18px;
  height: 18px;
  background: #dfeefc;
  border: 1px solid #9fb6cc;
}

/* toolbar */
.toolbar {
  display: flex;
  align-items: center;
  height: 28px;
  background: #f0f0f0;
  border-top: 1px solid #fff;
  border-bottom: 2px solid #77777a;
}

.grip {
  flex: none;
  width: 8px;
  height: 20px;
  background: radial-gradient(circle, #999 1px, transparent 1px) 2px 0 / 3px 3px repeat-y;
}

.grip.edge {
  width: 9px;
  height: 24px;
  border-left: 1px solid #999;
  background-position: 4px 0;
}

.sep {
  flex: none;
  width: 6px;
  height: 20px;
  background: linear-gradient(#a0a0a0, #a0a0a0) 2px 0 / 1px 100% no-repeat;
}

.tool {
  flex: none;
  display: flex;
  align-items: center;
  justify-content: center;
  width: 28px;
  height: 23px;
  color: #444;
  font-size: 9px;
}

.tool svg {
  flex: none;
}

.tool.drop {
  width: 37px;
  justify-content: flex-start;
  padding-left: 3px;
}

.tool.drop::after {
  content: '';
  margin-left: 4px;
  border: 3px solid transparent;
  border-top-color: #000;
  border-bottom: none;
}

.tool.text {
  width: auto;
  gap: 3px;
  padding: 0 5px 0 3px;
  color: #000;
  font-size: 12px;
}

.tool.pressed {
  background: #f9f9f9;
  border: 1px solid #a0a0a0;
  border-right-color: #fff;
  border-bottom-color: #fff;
  width: 26px;
  margin: 0 1px;
}

.tool.auto.pressed {
  width: auto;
  margin: 0 0 0 2px;
}

.tool.letter {
  font-family: 'Liberation Sans', sans-serif;
  font-size: 12px;
  font-weight: bold;
}

.tool.boxed span {
  width: 13px;
  border: 1px dotted #555;
  line-height: 13px;
}

.toolbar-right {
  display: flex;
  gap: 4px;
  margin-left: auto;
}

/* chart window */
.chart {
  flex: 1;
  min-height: 0;
  display: grid;
  grid-template-columns: minmax(0, 1fr) 44px;
  grid-template-rows: minmax(0, 644fr) minmax(0, 267fr) 21px;
  padding: 2px 0 0 3px;
  background: #14213a;
  border-left: 1px solid #808080;
}

.pane {
  position: relative;
  overflow: hidden;
  border: 1px solid #fff;
}

.price-pane {
  margin-bottom: 1px;
}

.canvas {
  display: block;
  width: 100%;
  height: 100%;
}

.overlay {
  position: absolute;
  top: 0;
  left: 0;
  pointer-events: none;
}

.canvas text {
  white-space: pre;
}

.small {
  font-size: 9px;
}

.small.bold {
  font-family: 'DejaVu Sans', sans-serif;
  font-weight: bold;
}

.arial {
  font-family: 'Liberation Sans', sans-serif;
  font-size: 11px;
}

.footer-text {
  font-size: 9px;
  font-family: 'DejaVu Sans', sans-serif;
  fill: #6a6a6a;
}

.bar-label {
  font-family: 'Liberation Sans', sans-serif;
  font-size: 10px;
  fill: #000;
}

.range {
  font-family: 'Liberation Serif', serif;
  font-size: 13px;
}

.range .day {
  font-size: 15px;
}

.tag {
  font-size: 11px;
}

.asia {
  fill: #463434;
}

.order {
  fill: none;
  stroke-dasharray: 9 6 3 6;
}

.order.red {
  stroke: #f00;
}

.order.green {
  stroke: #32cd32;
}

.level {
  fill: none;
  stroke-dasharray: 18 6;
  stroke-dashoffset: 10;
}

.flat {
  width: 60px;
  height: 20px;
  background: #696969;
  border: 1px solid #000;
  color: #ff8c00;
  font-family: 'Liberation Sans', sans-serif;
  font-size: 13px;
  line-height: 18px;
}

.flat.off {
  color: #fff;
}

.atr {
  position: absolute;
  left: 20px;
  top: 100px;
}

.zz {
  position: absolute;
  left: 570px;
  top: 13px;
  display: flex;
  gap: 10px;
}

.news {
  position: absolute;
  left: 0;
  top: 476px;
  width: 518px;
  height: 149px;
  padding-top: 2px;
  background: #202427;
  border: 1px solid #14171b;
  border-left: none;
  border-radius: 0 74px 74px 0;
}

.news table {
  width: 500px;
}

.news td, .news th {
  line-height: 13px;
  height: 13px;
}

.news th {
  font-family: 'DejaVu Sans', sans-serif;
  font-size: 10px;
}

.news td {
  color: #585858;
  text-shadow: 1px 1px #0c0e10;
}

.news .time {
  padding-left: 2px;
  font-family: 'DejaVu Sans', sans-serif;
  font-size: 10px;
}

.news .act {
  padding-left: 5px;
}

.c-time { width: 62px; }
.c-curr { width: 39px; }
.c-event { width: 200px; }
.c-est, .c-prev { width: 50px; }
.c-fcst { width: 45px; }

.news .h-time { padding-left: 15px; }
.news .h-curr { padding-left: 3px; }
.news .h-event { padding-left: 40px; }

.impact {
  display: inline-block;
  width: 9px;
  height: 9px;
  margin-right: 3px;
  border-radius: 50%;
  background: #555;
  vertical-align: middle;
}

.profit {
  position: absolute;
  right: 103px;
  top: 26px;
  width: 237px;
  color: #6b6b6b;
  font-family: 'Liberation Sans', sans-serif;
  font-size: 11px;
}

.profit th, .profit td {
  line-height: 13px;
  height: 13px;
}

.profit td, .profit thead th + th {
  text-align: right;
}

.profit thead th {
  font-size: 10px;
}

.profit thead th:first-child { padding-left: 3px; }
.profit .past { padding-left: 6px; }
.profit .month { padding-left: 4px; }

.profit .rule {
  direction: rtl;
}

.p-date { width: 60px; }
.p-points { width: 51px; }
.p-money { width: 65px; }
.p-pct { width: 45px; }
.p-sign { width: 16px; }

.gain td { color: #0f0; }
.loss td { color: #b22222; }

.symbols {
  position: absolute;
  right: 12px;
  top: 30px;
  width: 80px;
  display: flex;
  flex-direction: column;
  gap: 4px;
}

.symbols button {
  height: 16px;
  background: #4682b4;
  border: 2px solid #5f9fd4;
  border-right-color: #2c6698;
  border-bottom-color: #2c6698;
  color: #fff;
  font-family: 'Liberation Sans', sans-serif;
  font-size: 10px;
  line-height: 12px;
}

.symbols .active {
  background: #f5fffa;
  border-color: #c8c8c8 #6e6e6e #6e6e6e #c8c8c8;
  color: #4682b4;
}

/* scales */
.axis span, .bid {
  line-height: 11px;
  white-space: nowrap;
}

.price-axis {
  position: relative;
  display: flex;
  flex-direction: column;
  justify-content: space-between;
  padding-top: 15px;
  margin-bottom: -1px;
}

.axis span::before {
  content: '';
  display: inline-block;
  width: 2px;
  height: 1px;
  margin-right: 3px;
  background: #fff;
  vertical-align: middle;
}

.bid {
  position: absolute;
  left: 1px;
  top: 300px;
  width: 41px;
  padding-left: 4px;
  background: #fff;
  color: #000;
  font-weight: normal;
}

.tdi-axis {
  display: flex;
  flex-direction: column;
  justify-content: space-between;
  padding: 2px 0 3px;
}

.tdi-axis span::before {
  margin-right: 1px;
}

.low {
  display: flex;
  flex-direction: column;
}

.low span {
  line-height: 7px;
}

.time-axis {
  display: flex;
  grid-column: 1 / -1;
}

.time-axis span {
  flex: none;
  width: 64px;
  line-height: 12px;
}

.time-axis span::before {
  content: '';
  display: block;
  width: 1px;
  height: 3px;
  margin-left: 1px;
  background: #fff;
}

/* indicator */
.tdi polyline {
  fill: none;
  vector-effect: non-scaling-stroke;
}

.band { stroke: #87ceeb; }
.base { stroke: #ff0; }
.signal { stroke: #ff4500; stroke-dasharray: 4 3; }
.rsi { stroke: #00ff7f; stroke-width: 2; stroke-linejoin: round; }

.trend {
  position: absolute;
  right: 12px;
  top: 18px;
  width: 109px;
  display: flex;
  justify-content: space-between;
  color: #0f0;
  font-family: 'DejaVu Sans', sans-serif;
  font-size: 11px;
  font-weight: bold;
  line-height: 22px;
}

.trend-text {
  display: flex;
  flex-direction: column;
  gap: 6px;
}

.trend-text .lower {
  padding-left: 7px;
}

.trend-arrows {
  display: flex;
  flex-direction: column;
  gap: 22px;
  padding-top: 16px;
}

/* bottom */
.tabs {
  display: flex;
  height: 4px;
  background: #f0f0f0;
}

.tab {
  width: 78px;
  margin-left: 7px;
  background: #fff;
}

.tab-line {
  flex: 1;
  margin-top: 1px;
  border: 1px solid #000;
  border-width: 1px 0 0 1px;
}

.activate {
  position: absolute;
  right: 70px;
  bottom: 10px;
  width: 266px;
  color: rgba(255, 255, 255, 0.45);
  font-family: 'Open Sans', sans-serif;
  font-size: 14px;
  line-height: 20px;
  white-space: nowrap;
}

.activate-title {
  font-size: 19px;
  line-height: 26px;
}
```
FILE: script.js
```js
const NS = 'http://www.w3.org/2000/svg';
const BAR = 4;
const LEFT = 5;

// closing positions, one per M5 bar
const closes = [
  369, 380, 397, 389, 388, 391, 365, 397, 408, 407, 397, 418, 433, 439, 433, 416, 377, 365, 351, 358,
  377, 381, 384, 388, 397, 393, 390, 380, 362, 359, 357, 363, 374, 383, 396, 382, 373, 365, 383, 390,
  380, 384, 378, 361, 342, 353, 358, 322, 332, 318, 307, 305, 307, 320, 333, 345, 352, 355, 348, 350,
  322, 344, 340, 343, 324, 325, 331, 337, 339, 347, 352, 348, 340, 336,
  381, 368, 370, 366, 361, 354, 355, 342, 349, 348, 360, 326, 328, 326, 335, 333, 332, 328, 326, 322,
  328, 343, 341, 327, 332, 321, 326, 339, 338, 335, 339, 341, 342, 341, 338, 358, 377, 370, 365, 351,
  362, 363, 388, 382, 389, 395, 398, 386, 395, 383, 388, 389, 392, 389, 349, 365, 357, 367, 373, 377,
  378, 379, 381, 377, 382, 385, 391, 400, 393, 378, 379, 418, 422, 412, 443, 438, 436, 419, 429, 424,
  423, 420, 412, 426, 423, 422, 420, 412, 409, 412, 417, 410, 412, 409, 390, 388, 401, 396, 393, 389,
  383, 386, 392, 386, 394, 385, 366, 382, 387, 391, 386, 378, 374, 380, 395, 407, 409, 397, 401, 393,
  376, 368, 349, 347, 348, 372, 366, 344, 354, 372, 363, 346, 325, 348, 338, 345, 351, 352, 351, 348,
  359, 370, 347, 354, 358, 357, 355, 346, 343, 334, 313, 343, 331, 345, 329, 382, 390, 377, 379, 367,
  352, 363, 346, 336, 340, 325, 340, 372, 370, 379, 397, 386, 360, 358, 367, 377, 388, 419, 406, 440,
  432, 435, 420, 422, 403, 393, 361, 368, 374, 382, 368, 386, 375, 372, 388, 381, 379, 389, 393, 387,
  395, 393, 397, 356, 358
];

// fractal dots, the bar's wick runs up to them
const fractals = [
  [77, 348], [141, 403], [241, 362], [265, 313], [301, 387], [377, 319], [401, 318], [389, 343],
  [489, 403], [525, 346], [569, 400], [581, 355], [725, 361], [777, 418], [797, 333], [825, 385],
  [829, 323], [865, 379], [921, 403], [961, 324], [1045, 348], [1105, 412], [1113, 340]
];

const levels = [
  ['[+2/8] - 132.13', '#fff'], ['[+1/8] - 132.08', '#fff'], ['[8/8] - 132.03', '#4169e1'],
  ['[7/8] - 131.98', '#ffa500'], ['[6/8] - 131.93', '#f00'], ['[5/8] - 131.88', '#0f0'],
  ['[4/8] - 131.84', '#87cefa'], ['[3/8] - 131.79', '#0f0'], ['[2/8] - 131.74', '#f00'],
  ['[1/8] - 131.69', '#ffa500'], ['[0/8] - 131.64', '#4169e1']
];

const tags = [
  [280, 308, '132.010', '#0ff'], [156, 398, '131.840', '#0ff'], [68, 447, '131.746', '#adde0c'],
  [16, 351, '131.929', '#0ff'], [976, 319, '131.989', '#0ff'], [792, 413, '131.811', '#0ff'],
  [1120, 407, '131.822', '#0ff'], [1144, 352, '131.926', '#fff']
];

const swings = [
  [213, 301, 'none'], [52, 453, 'none'], [597, 447, 'none'],
  [901, 307, '#f00'], [1017, 451, '#00f']
];

function add(parent, name, attrs, text) {
  const el = document.createElementNS(NS, name);
  for (const key in attrs) el.setAttribute(key, attrs[key]);
  if (text) el.textContent = text;
  parent.appendChild(el);
  return el;
}

function drawCandles() {
  const g = document.getElementById('candles');
  let open = 378;
  closes.forEach((close, i) => {
    const x = LEFT + i * BAR;
    const up = close < open;
    const top = Math.min(open, close);
    const bottom = Math.max(open, close);
    let high = top - 1 - (i * 7) % 6;
    let low = bottom + 1 + (i * 5) % 7;
    fractals.forEach(([fx, fy]) => {
      if (fx !== x) return;
      if (fy < top) high = fy;
      if (fy > bottom) low = fy;
    });
    const color = up ? '#4682b4' : '#e0183c';
    add(g, 'rect', { x: x, y: high, width: 1, height: low - high, fill: color });
    add(g, 'rect', { x: x - 1, y: top, width: 3, height: Math.max(bottom - top, 1), fill: color });
    if (!up && bottom - top > 3) {
      add(g, 'rect', { x: x, y: top + 1, width: 1, height: bottom - top - 2, fill: '#ff4520' });
    }
    open = close;
  });
}

function drawLabels() {
  const lv = document.getElementById('levels');
  levels.forEach(([text, color], i) => {
    add(lv, 'text', { x: i < 2 ? 102 : 105, y: 262 + Math.round(i * 25.8), fill: color }, text);
  });

  const fr = document.getElementById('fractals');
  fractals.forEach(([x, y]) => add(fr, 'circle', { cx: x, cy: y, r: 3 }));

  const tg = document.getElementById('tags');
  tags.forEach(([x, y, text, color]) => {
    add(tg, 'path', { d: `M${x - 10} ${y + 6.5}h10`, stroke: color });
    add(tg, 'rect', { x: x + 0.5, y: y + 0.5, width: 41, height: 12, fill: 'none', stroke: color });
    add(tg, 'text', { x: x + 1, y: y + 11, fill: color, class: 'tag' }, text);
  });

  const sw = document.getElementById('swings');
  swings.forEach(([x, y, color]) => {
    add(sw, 'path', { d: `M${x - 5} ${y + 5}l5 -9 3 7z`, fill: '#ff0' });
    add(sw, 'circle', { cx: x, cy: y, r: 7, fill: 'none', stroke: '#ffa500', 'stroke-width': 2 });
    add(sw, 'circle', { cx: x, cy: y, r: 5, fill: 'none', stroke: color, 'stroke-width': 2 });
    add(sw, 'circle', { cx: x, cy: y, r: 3, fill: '#ff9a10' });
  });
}

drawCandles();
drawLabels();
```
